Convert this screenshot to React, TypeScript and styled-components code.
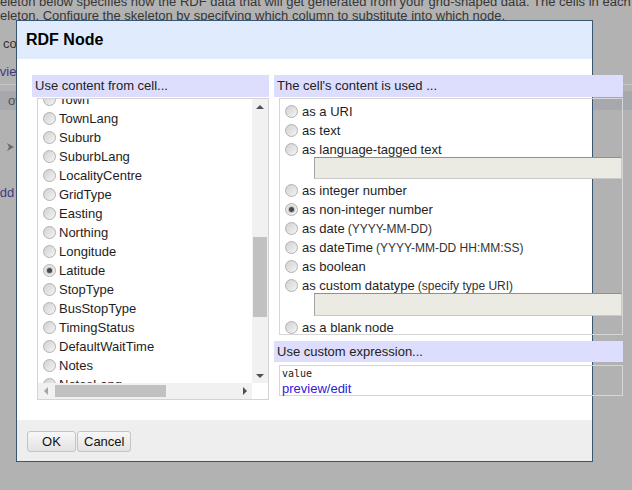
import styled, { createGlobalStyle, css } from 'styled-components'

const GlobalStyle = createGlobalStyle`
  html, body {
    margin: 0;
    padding: 0;
  }
  body {
    font-family: "Liberation Sans", Arial, sans-serif;
    background: #b2b2b2;
  }
`

const columns = [
  'Town',
  'TownLang',
  'Suburb',
  'SuburbLang',
  'LocalityCentre',
  'GridType',
  'Easting',
  'Northing',
  'Longitude',
  'Latitude',
  'StopType',
  'BusStopType',
  'TimingStatus',
  'DefaultWaitTime',
  'Notes',
  'NotesLang',
]

type Usage = { label: string; hint?: string; input?: boolean; checked?: boolean; inputHeight?: number }

const usages: Usage[] = [
  { label: 'as a URI' },
  { label: 'as text' },
  { label: 'as language-tagged text', input: true, inputHeight: 22 },
  { label: 'as integer number' },
  { label: 'as non-integer number', checked: true },
  { label: 'as date', hint: '(YYYY-MM-DD)' },
  { label: 'as dateTime', hint: '(YYYY-MM-DD HH:MM:SS)' },
  { label: 'as boolean' },
  { label: 'as custom datatype', hint: '(specify type URI)', input: true, inputHeight: 23 },
  { label: 'as a blank node' },
]

export default function App() {
  return (
    <>
      <GlobalStyle />
      <Page>
        <Intro>
          skeleton below specifies how the RDF data that will get generated from your grid-shaped data. The cells in each record of your data
          <br />
          skeleton. Configure the skeleton by specifying which column to substitute into which node.
        </Intro>
        <PrefixLine>co</PrefixLine>
        <BackLink $offset={-19}>preview</BackLink>
        <TabRule />
        <TabBand>ov</TabBand>
        <Chevron width="7" height="8" viewBox="0 0 7 8">
          <polygon points="0,0 7,4 0,8 2,4" fill="#6c6c6c" />
        </Chevron>
        <BackLink $offset={-9} $top={34}>Add</BackLink>

        <Dialog>
          <DialogHeader>RDF Node</DialogHeader>
          <DialogBody>
            <Columns>
              <Column>
                <SectionHead>Use content from cell...</SectionHead>
                <ListBox>
                  <ListViewport>
                    <ListContent>
                      {columns.map((c) => (
                        <Option key={c}>
                          <Radio $checked={c === 'Latitude'} />
                          {c}
                        </Option>
                      ))}
                    </ListContent>
                  </ListViewport>
                  <VScroll>
                    <ArrowButton>
                      <Arrow $dir="up" />
                    </ArrowButton>
                    <VThumb />
                    <ArrowButton>
                      <Arrow $dir="down" />
                    </ArrowButton>
                  </VScroll>
                  <HScroll>
                    <ArrowButton>
                      <Arrow $dir="left" $disabled />
                    </ArrowButton>
                    <HThumb />
                    <ArrowButton>
                      <Arrow $dir="right" />
                    </ArrowButton>
                  </HScroll>
                  <Corner />
                </ListBox>
              </Column>
              <Column>
                <SectionHead>The cell's content is used ...</SectionHead>
                <UsageBox>
                  {usages.map((u) => (
                    <UsageItem key={u.label}>
                      <Option $right>
                        <Radio $checked={u.checked} />
                        {u.label}
                        {u.hint && <Hint>{u.hint}</Hint>}
                      </Option>
                      {u.input && <DisabledInput $h={u.inputHeight ?? 22} />}
                    </UsageItem>
                  ))}
                </UsageBox>
                <SectionHead $gap={6} $h={21}>Use custom expression...</SectionHead>
                <ExpressionBox>
                  <Code>value</Code>
                  <EditLink>preview/edit</EditLink>
                </ExpressionBox>
              </Column>
            </Columns>
          </DialogBody>
          <DialogFooter>
            <Button $min={49}>OK</Button>
            <Button>Cancel</Button>
          </DialogFooter>
        </Dialog>
      </Page>
    </>
  )
}

const Page = styled.div`
  position: relative;
  width: 632px;
  height: 490px;
  overflow: hidden;
  background: #b2b2b2;
  color: #363636;
  font-size: 13px;
`

const Intro = styled.p`
  margin: -5px 0 0 -13px;
  line-height: 14px;
  white-space: nowrap;
`

const PrefixLine = styled.div`
  margin: 13px 0 0 3px;
  line-height: 15px;
`

const BackLink = styled.div<{ $offset: number; $top?: number }>`
  margin: ${(p) => p.$top ?? 13}px 0 0 ${(p) => p.$offset}px;
  line-height: 15px;
  color: #3c3c86;
`

const TabRule = styled.div`
  margin-top: 5px;
  height: 1px;
  background: #c6c8cd;
`

const TabBand = styled.div`
  margin-top: 6px;
  height: 19px;
  line-height: 19px;
  padding-left: 8px;
  background: #a6a8ad;
  color: #505050;
`

const Chevron = styled.svg`
  display: block;
  margin: 33px 0 0 7px;
`

const Dialog = styled.div`
  position: absolute;
  left: 16px;
  top: 20px;
  width: 575px;
  border: 1px solid #3a5570;
  background: #fff;
  color: #222;
`

const DialogHeader = styled.div`
  height: 38px;
  display: flex;
  align-items: center;
  padding-left: 9px;
  background: #e0ecfd;
  color: #000;
  font-size: 16px;
  font-weight: bold;
`

const DialogBody = styled.div`
  height: 361px;
  box-sizing: border-box;
  padding: 16px 0 0 15px;
  background: #fff;
`

const Columns = styled.div`
  display: grid;
  grid-template-columns: 237px 349px;
  column-gap: 5px;
  width: 591px;
`

const Column = styled.div`
  display: flex;
  flex-direction: column;
`

const SectionHead = styled.div<{ $gap?: number; $h?: number }>`
  margin-top: ${(p) => p.$gap ?? 0}px;
  height: ${(p) => p.$h ?? 22}px;
  line-height: ${(p) => p.$h ?? 22}px;
  padding-left: 3px;
  background: #ddddfd;
  color: #222;
  font-size: 13px;
`

const ListBox = styled.div`
  margin: 1px 0 0 5px;
  height: 302px;
  box-sizing: border-box;
  border: 1px solid #d4d4d4;
  display: grid;
  grid-template-columns: 1fr 16px;
  grid-template-rows: 1fr 16px;
`

const ListViewport = styled.div`
  overflow: hidden;
`

const ListContent = styled.div`
  margin-top: -9px;
`

const Option = styled.label<{ $right?: boolean }>`
  display: flex;
  align-items: center;
  gap: ${(p) => (p.$right ? 4 : 3)}px;
  height: 19px;
  padding-left: 5px;
  white-space: nowrap;
  font-size: 13px;
  color: #1e1e1e;
`

const Radio = styled.span<{ $checked?: boolean }>`
  position: relative;
  flex: none;
  width: 13px;
  height: 13px;
  box-sizing: border-box;
  border-radius: 50%;
  border: 1px solid #b1b1b1;
  background: linear-gradient(135deg, #d2d2d2 0%, #e4e4e4 55%, #f6f6f6 100%);
  ${(p) =>
    p.$checked &&
    css`
      background: linear-gradient(135deg, #e2e2e2 0%, #f2f2f2 100%);
      &::after {
        content: '';
        position: absolute;
        left: 3px;
        top: 3px;
        width: 5px;
        height: 5px;
        border-radius: 50%;
        background: #4a4a4a;
        box-shadow: 0 0 1px 1px #bdbdbd;
      }
    `}
`

const VScroll = styled.div`
  display: flex;
  flex-direction: column;
  align-items: stretch;
  background: #f1f1f1;
`

const HScroll = styled.div`
  display: flex;
  background: #f1f1f1;
`

const Corner = styled.div`
  background: #fff;
`

const ArrowButton = styled.div`
  flex: none;
  width: 16px;
  height: 16px;
  display: flex;
  align-items: center;
  justify-content: center;
  align-self: center;
`

const Arrow = styled.span<{ $dir: 'up' | 'down' | 'left' | 'right'; $disabled?: boolean }>`
  width: 0;
  height: 0;
  border: 4px solid transparent;
  ${(p) => {
    const c = p.$disabled ? '#a3a3a3' : '#505050'
    switch (p.$dir) {
      case 'up':
        return css`border-bottom-color: ${c}; border-top-width: 0; margin-top: -1px;`
      case 'down':
        return css`border-top-color: ${c}; border-bottom-width: 0; margin-top: 1px;`
      case 'left':
        return css`border-right-color: ${c}; border-left-width: 0;`
      default:
        return css`border-left-color: ${c}; border-right-width: 0; margin-left: 1px;`
    }
  }}
`

const VThumb = styled.div`
  margin: 122px 1px 0;
  height: 80px;
  background: #c1c1c1;
  flex: none;
  margin-bottom: auto;
`

const HThumb = styled.div`
  margin: 2px 0 2px 1px;
  width: 111px;
  background: #c1c1c1;
  flex: none;
  margin-right: auto;
`

const UsageBox = styled.div`
  margin: 1px 0 0 5px;
  height: 237px;
  box-sizing: border-box;
  border: 1px solid #d6d6d6;
  padding-top: 3px;
`

const UsageItem = styled.div`
  display: flex;
  flex-direction: column;
`

const Hint = styled.span`
  margin-left: -1px;
  font-size: 12px;
  color: #333;
`

const DisabledInput = styled.div<{ $h: number }>`
  margin: -2px 0 2px 34px;
  height: ${(p) => p.$h}px;
  box-sizing: border-box;
  background: #ebebe4;
  border: 1px solid #c9c9c9;
  border-top-color: #8f8f8f;
  border-left-color: #a4a4a4;
`

const ExpressionBox = styled.div`
  margin: 3px 0 0 5px;
  height: 31px;
  box-sizing: border-box;
  border: 1px solid #d6d6d6;
  padding: 1px 2px 0;
`

const Code = styled.div`
  font-family: "DejaVu Sans Mono", "Liberation Mono", monospace;
  font-size: 10px;
  line-height: 13px;
  color: #222;
`

const EditLink = styled.a`
  display: block;
  font-size: 13px;
  line-height: 17px;
  color: #3020d4;
  cursor: pointer;
`

const DialogFooter = styled.div`
  height: 41px;
  box-sizing: border-box;
  padding: 11px 10px 0;
  background: #eeeeee;
  display: flex;
  align-items: flex-start;
  gap: 1px;
`

const Button = styled.button<{ $min?: number }>`
  height: 21px;
  min-width: ${(p) => p.$min ?? 0}px;
  padding: 0 6px;
  border: 1px solid #c4c4c4;
  border-radius: 3px;
  background: linear-gradient(#f7f7f7, #e3e3e3);
  font-family: "Liberation Sans", Arial, sans-serif;
  font-size: 13px;
  color: #111;
`
